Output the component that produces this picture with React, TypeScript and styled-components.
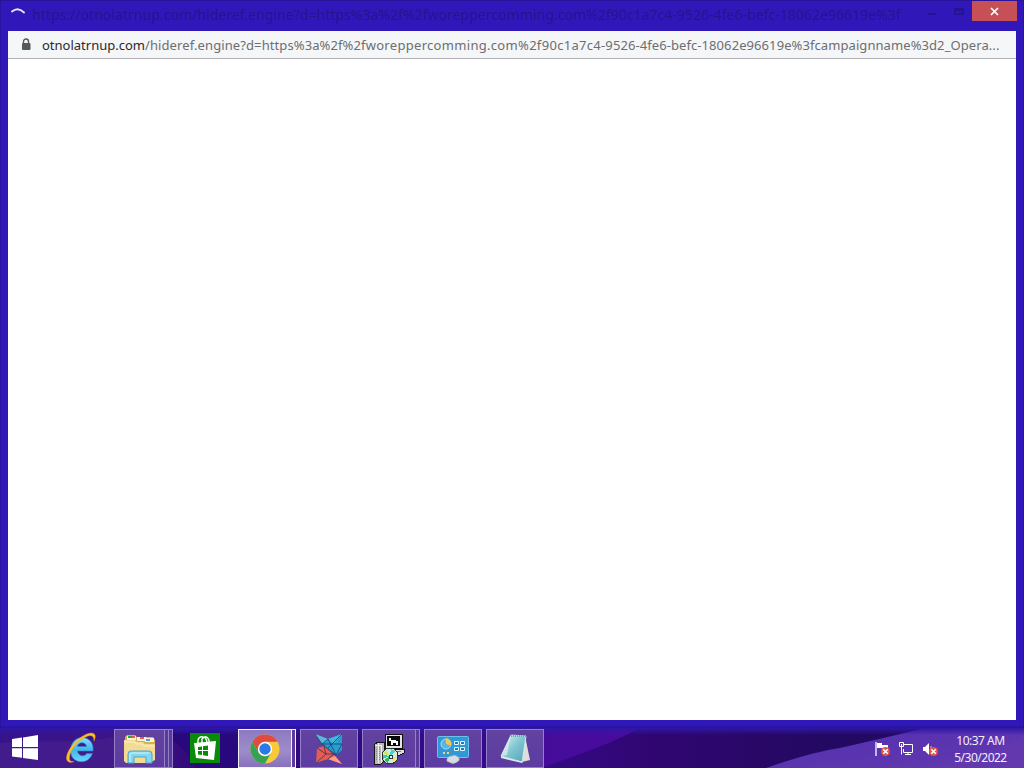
import React from 'react';
import styled, { createGlobalStyle } from 'styled-components';

const GlobalStyle = createGlobalStyle`
  * { box-sizing: border-box; }
  body { margin: 0; overflow: hidden; font-family: "Noto Sans", "Open Sans", sans-serif; }
  svg { display: block; }
`;

const Desktop = styled.div`
  width: 1024px;
  height: 768px;
  display: flex;
  flex-direction: column;
  background: #26087a;
`;

const BrowserWindow = styled.main`
  height: 728px;
  padding: 0 8px 8px;
  display: flex;
  flex-direction: column;
  background: #3017b9;
  border-top: 1px solid #2a129a;
  box-shadow: inset 1px 0 #2a139f, inset -1px 0 #2a139f, inset 0 -2px #2b14a0;
`;

const TitleBar = styled.header`
  height: 30px;
  flex: none;
  display: flex;
  align-items: flex-start;
`;

const Spinner = styled.svg`
  margin: 5px 0 0 2px;
  flex: none;
`;

const Title = styled.div`
  width: 884px;
  margin: 4px 0 0 6px;
  font-size: 14px;
  line-height: 20px;
  letter-spacing: 0.04px;
  white-space: nowrap;
  color: #26148c;
  filter: blur(0.6px);
`;

const Controls = styled.div`
  margin-left: auto;
  display: flex;
`;

const CloseButton = styled.button`
  width: 45px;
  height: 20px;
  margin-right: -1px;
  padding: 0;
  border: 0;
  display: grid;
  place-items: center;
  background: #c74f56;
`;

const AddressBar = styled.div`
  height: 28px;
  flex: none;
  padding: 0 0 0 13px;
  display: flex;
  align-items: center;
  background: #f5f6f8;
  border-bottom: 1px solid #b2b2b6;
`;

const Address = styled.div`
  margin-left: 11px;
  font-size: 13px;
  line-height: 20px;
  white-space: nowrap;
  color: #6c6e71;
`;

const Host = styled.span`
  color: #27292c;
`;

const UrlPart = styled.span<{ $tracking: number }>`
  letter-spacing: ${p => p.$tracking}px;
`;

const Page = styled.section`
  flex: 1;
  background: #fff;
`;

const Taskbar = styled.footer`
  position: relative;
  height: 40px;
  display: flex;
  align-items: flex-start;
  overflow: hidden;
`;

const Wallpaper = styled.svg`
  position: absolute;
  inset: 0;
`;

const Apps = styled.nav`
  position: relative;
  display: flex;
  padding-top: 1px;
`;

const Launcher = styled.div<{ $width: number; $end?: number }>`
  width: ${p => p.$width}px;
  height: 38px;
  padding-right: ${p => p.$end ?? 0}px;
  display: grid;
  place-items: center;
`;

const Group = styled.div<{ $gap?: number }>`
  display: flex;
  margin-right: ${p => p.$gap ?? 4}px;
`;

const AppButton = styled.div<{ $width: number; $active?: boolean }>`
  width: ${p => p.$width}px;
  height: 39px;
  display: grid;
  place-items: center;
  border: 1px solid ${p => (p.$active ? '#f4f1fb' : '#9480c8')};
  background: ${p => (p.$active ? 'linear-gradient(#8e79bf, #9d8ccb 55%, #8772bb)' : 'linear-gradient(#62439f, #5d3ba2)')};
`;

const StackEdge = styled.div<{ $active?: boolean }>`
  width: 4px;
  height: 39px;
  border: 1px solid ${p => (p.$active ? '#f4f1fb' : '#9480c8')};
  border-left: 0;
  background: #5a3b9c;
`;

const Tray = styled.div`
  position: relative;
  margin-left: auto;
  padding-right: 17px;
  display: flex;
  align-items: flex-start;
`;

const TrayIcons = styled.div`
  display: flex;
  gap: 8px;
  margin: 13px 16px 0 0;
`;

const Clock = styled.div`
  width: 53px;
  padding-top: 4px;
  text-align: center;
  white-space: nowrap;
  color: #f3effb;
  font-size: 12px;
  line-height: 17px;
  letter-spacing: -0.5px;
`;

function TaskbarArt() {
  return (
    <Wallpaper width="1024" height="40" viewBox="0 0 1024 40">
      <defs>
        <linearGradient id="base">
          <stop offset="0" stopColor="#34148c" /><stop offset=".14" stopColor="#421284" />
          <stop offset=".2" stopColor="#2d0879" /><stop offset=".5" stopColor="#350b8c" />
          <stop offset=".64" stopColor="#300571" /><stop offset=".8" stopColor="#240962" />
        </linearGradient>
        <linearGradient id="hill" x1="0" y1="0" x2="1" y2="1">
          <stop offset="0" stopColor="#5230b4" /><stop offset="1" stopColor="#6238ac" />
        </linearGradient>
        <linearGradient id="petal" x1="0" y1="0" x2="1" y2="0">
          <stop offset="0" stopColor="#450c9a" /><stop offset="1" stopColor="#480b9e" />
        </linearGradient>
        <linearGradient id="edge" x1="0" y1="0" x2="0" y2="1">
          <stop offset="0" stopColor="#2e17a9" /><stop offset="1" stopColor="#2e17a9" stopOpacity="0" />
        </linearGradient>
      </defs>
      <rect width="1024" height="40" fill="url(#base)" />
      <path d="M0 15C35 11 70 17 116 9V40H0Z" fill="#48208d" opacity=".65" />
      <path d="M172 0h70v40h-45Q184 18 172 13Z" fill="#29077c" />
      <path d="M540 0H638Q623 12 540 40Z" fill="url(#petal)" />
      <path d="M766 40Q812 24 840 20Q875 12 909 4L924 0H1024V40Z" fill="url(#hill)" />
      <path d="M920 40Q980 31 1024 7V40Z" fill="#6b3bb2" opacity=".35" />
      <rect width="1024" height="7" fill="url(#edge)" />
    </Wallpaper>
  );
}

const WindowsLogo = () => (
  <svg width="26" height="26" viewBox="0 0 26 26" fill="#fff">
    <path d="M0 4L10 2.600V12H0ZM11 2.400L26 0V12H11ZM0 13.200H10V22.800L0 21.400ZM11 13.200H26V25L11 23Z" />
  </svg>
);

const ExplorerE = () => (
  <svg width="32" height="32" viewBox="0 0 32 32">
    <defs><linearGradient id="ie" x1="0" y1="0" x2="0" y2="1"><stop stopColor="#89dcfa" /><stop offset=".5" stopColor="#43b5ed" /><stop offset="1" stopColor="#6dd5f8" /></linearGradient></defs>
    <path fillRule="evenodd" d="M28 19H12.500C13 24.500 20 25 21.500 21.500H27.500C24.500 29.500 17 31.500 11 28.500C2 24 4.500 6 17 5.500C25 5.500 29 12 28 19ZM12.500 14.500H21.500C21 9.500 13 9.500 12.500 14.500Z" fill="url(#ie)" stroke="#2780c7" strokeWidth=".6" />
    <path d="M9 29.500C4 32 0 29 2 23C5 13 17 2 26 1C31 1 31 5 29 9C29 4 27 3 23 4C14 7 5 18 4.500 25C4 29 6 30 9 29.500Z" fill="#f6c22b" stroke="#e79c13" strokeWidth=".4" />
  </svg>
);

const FolderIcon = () => (
  <svg width="34" height="32" viewBox="0 0 34 32">
    <path d="M2 4L4 2H12L14 4H30L32 7V27H2Z" fill="#d8ad5d" />
    <path d="M4 3H13V7H4ZM14 4H23V8H14ZM22 5H31V9H22Z" fill="#fff4cd" />
    <path d="M5 4h4" stroke="#29a552" strokeWidth="2" /><path d="M9 4h3M17 5h4" stroke="#e35f49" strokeWidth="2" /><path d="M23 7h4" stroke="#43a5df" strokeWidth="2" />
    <path d="M1 7H12L14 9H20L22 11H32V27L26 30H3L1 28Z" fill="#f3db93" />
    <path d="M2 9H11L13 11H19L21 13H31" fill="none" stroke="#fff3c8" />
    <path d="M5 29V21Q5 18 8 18H26Q29 18 29 21V30H23V24H11V30H5Z" fill="#83d7ee" stroke="#4da6ca" />
    <path d="M7 29V21Q7 20 9 20H26" fill="none" stroke="#d3f5fb" />
  </svg>
);

const StoreIcon = () => (
  <svg width="30" height="30" viewBox="0 0 30 30">
    <rect width="30" height="30" fill="#078b09" />
    <path d="M8 11V7Q9 3 13 4Q16 4 17 9M12 10V6Q16 1 19 7V9" fill="none" stroke="#fff" strokeWidth="1.400" />
    <path d="M4 10L26 8L24 27L6 25Z" fill="#fff" />
    <path d="M8 14L12 13.500V17H8ZM13 13.300L18 12.500V17H13ZM8 18H12V22L8 21.500ZM13 18H18V23L13 22.200Z" fill="#078b09" />
  </svg>
);

const ChromeIcon = () => (
  <svg width="30" height="30" viewBox="0 0 30 30">
    <circle cx="15" cy="15" r="14.500" fill="#f9c93b" />
    <path d="M2.440 7.750A14.500 14.500 0 0 1 27.560 7.750H15L8.700 18.600Z" fill="#df4b3f" />
    <path d="M2.440 7.750A14.500 14.500 0 0 0 15 29.500L21.300 18.600A7.250 7.250 0 0 1 8.700 18.600Z" fill="#35a255" />
    <circle cx="15" cy="15" r="7.200" fill="#fff" /><circle cx="15" cy="15" r="5.700" fill="#2b79e6" />
  </svg>
);

const PolygonBird = () => (
  <svg width="30" height="32" viewBox="0 0 30 32">
    <path d="M1 1L14 6L28 1V17L22 22L8 11Z" fill="#259fd0" />
    <path d="M3 15L10 13L21 23L28 31L14 26L2 30Z" fill="#e85b51" />
    <path d="M14 26L21 23L28 31Z" fill="#ff9c83" /><path d="M1 1L14 6L8 11Z" fill="#5db8d8" /><path d="M14 6L28 1L20 11Z" fill="#42b4df" />
    <path d="M1 1L8 11L22 22M14 6L8 11H28M14 6L22 22L28 11M28 1L14 15M3 15L12 21L2 30M10 13L12 21H20L14 26" fill="none" stroke="#293765" strokeWidth=".8" />
  </svg>
);

const InstallerIcon = () => (
  <svg width="32" height="32" viewBox="0 0 32 32" shapeRendering="crispEdges">
    <path d="M1 12L5 9H11V28L8 31H1Z" fill="#b9b9b9" stroke="#171717" />
    <path d="M5 10V30M2 12H9M8 12V30" stroke="#eee" /><path d="M3 16v12M6 14v14" stroke="#8c8c8c" strokeDasharray="1 1" />
    <path d="M12 1H29V15H12Z" fill="#e4e4e4" stroke="#111" /><path d="M14 3H27V13H14Z" fill="#080808" />
    <path d="M16 5h2v2h5v1h2v4h-2v-2h-3v2h-2V8h-2Z" fill="#fff" />
    <path d="M12 16H31V20L27 22H12Z" fill="#dedede" stroke="#111" /><path d="M22 18h6" stroke="#777" />
    <circle cx="17" cy="23" r="8" fill="#d4ebd8" stroke="#26312a" />
    <path d="M17 23L10 20L13 17Z" fill="#cfe65d" /><path d="M17 23L18 16L22 18Z" fill="#38d4d7" /><path d="M17 23L24 24L21 29Z" fill="#f4e65e" /><path d="M17 23L15 30L11 27Z" fill="#37bb54" /><path d="M17 23L10 22L10 26Z" fill="#33c7c6" />
    <path d="M16 22h3v3h-3Z" fill="#fff" stroke="#333" />
  </svg>
);

const ControlPanelIcon = () => (
  <svg width="32" height="30" viewBox="0 0 32 30">
    <rect x=".5" y="2.500" width="31" height="21" rx="1" fill="#3297d5" stroke="#69c1ed" />
    <circle cx="9" cy="10" r="5" fill="#56b5e4" stroke="#a8dcf4" /><path d="M9 10V4A6 6 0 0 1 14 12Z" fill="#edc75c" />
    <path d="M6 19h2m2 0h2" stroke="#f5d768" strokeWidth="2" />
    <path d="M17.500 7.500h4v3h-4ZM23.500 7.500h4v3h-4ZM17.500 13.500h4v3h-4ZM23.500 13.500h4v3h-4Z" fill="#1681be" stroke="#dcfaff" />
    <path d="M10 25Q11 22 15 22Q18 20 21 23Q24 26 20 28Q16 31 12 28Q9 28 10 25Z" fill="#d4dce5" stroke="#a2b0c0" strokeWidth=".6" />
  </svg>
);

const NotepadIcon = () => (
  <svg width="32" height="30" viewBox="0 0 32 30">
    <defs><linearGradient id="note" x1="0" y1="0" x2="1" y2="1"><stop stopColor="#e4f3f2" /><stop offset=".5" stopColor="#7fc5d2" /><stop offset="1" stopColor="#579fb6" /></linearGradient></defs>
    <path d="M26 2L31 26L23 28Z" fill="#deded9" /><path d="M2 22L12 1L27 2L23 28Z" fill="url(#note)" stroke="#d9f0ef" strokeWidth=".8" />
    <path d="M2 22L24 28L23 29L2 24Z" fill="#d7ecee" /><path d="M12 1L8 21L2 22Z" fill="#e4f3ef" opacity=".65" />
    <path d="M12 2H27" stroke="#8b9da1" strokeWidth="2" strokeDasharray="1 1" />
  </svg>
);

const ErrorBadge = () => <><circle cx="11.500" cy="10.500" r="4.500" fill="#e25549" /><path d="M9.200 8.200L13.800 12.800M13.800 8.200L9.200 12.800" stroke="#fff" strokeWidth="1.500" /></>;

export default function App() {
  return (
    <Desktop>
      <GlobalStyle />
      <BrowserWindow>
        <TitleBar>
          <Spinner width="16" height="16" viewBox="0 0 16 16"><path d="M2 5.500Q8 .5 14 6.500" fill="none" stroke="#e7e2fb" strokeWidth="1.800" strokeLinecap="round" /></Spinner>
          <Title>https://otnolatrnup.com/hideref.engine?d=https%3a%2f%2fworeppercomming.com%2f90c1a7c4-9526-4fe6-befc-18062e96619e%3f</Title>
          <Controls>
            <svg width="56" height="20" viewBox="6 0 56 20" fill="none" stroke="#251395" strokeWidth="2"><path d="M18 13h8M45 8h8v5h-8ZM45 9h8" /></svg>
            <CloseButton aria-label="Close"><svg width="9" height="9" viewBox="0 0 9 9"><path d="M1 1L8 8M8 1L1 8" stroke="#fff" strokeWidth="1.700" /></svg></CloseButton>
          </Controls>
        </TitleBar>
        <AddressBar>
          <svg width="10" height="13" viewBox="0 0 10 13"><path d="M2.500 6V3.500a2.500 2.500 0 0 1 5 0V6" fill="none" stroke="#55585d" strokeWidth="1.400" /><rect x="1" y="5" width="8.500" height="7" rx="1" fill="#55585d" /></svg>
          <Address>
            <Host>otnolatrnup.com</Host>
            <UrlPart $tracking={0.1}>/hideref.engine?d=https%3a%2f%2f</UrlPart>
            <UrlPart $tracking={0.31}>woreppercomming.com%2f90c1a7c4</UrlPart>
            <UrlPart $tracking={0.08}>-9526-4fe6-befc-18062e96619e%3fcampaignname%3d2_Opera...</UrlPart>
          </Address>
        </AddressBar>
        <Page />
      </BrowserWindow>
      <Taskbar>
        <TaskbarArt />
        <Apps>
          <Launcher $width={50}><WindowsLogo /></Launcher>
          <Launcher $width={64} $end={2}><ExplorerE /></Launcher>
          <Group $gap={0}><AppButton $width={51}><FolderIcon /></AppButton><StackEdge /><StackEdge /></Group>
          <Launcher $width={65} $end={2}><StoreIcon /></Launcher>
          <Group><AppButton $width={54} $active><ChromeIcon /></AppButton><StackEdge $active /></Group>
          <Group><AppButton $width={58}><PolygonBird /></AppButton></Group>
          <Group><AppButton $width={54}><InstallerIcon /></AppButton><StackEdge /></Group>
          <Group><AppButton $width={58}><ControlPanelIcon /></AppButton></Group>
          <Group><AppButton $width={58}><NotepadIcon /></AppButton></Group>
        </Apps>
        <Tray>
          <TrayIcons>
            <svg width="16" height="16" viewBox="0 0 16 16"><path d="M2 1V15" stroke="#fff" strokeWidth="1.300" /><path d="M3 2H8V4H14V9H8V7H3Z" fill="#fff" /><ErrorBadge /></svg>
            <svg width="16" height="16" viewBox="0 0 16 16" fill="none" stroke="#fff"><path d="M6 3.500H14.500V11.500H5.500V8M7 13.500H13M10 12V14" /><path d="M1.500 1.500H5.500V5.500H1.500ZM3.500 3V13.500" /></svg>
            <svg width="16" height="16" viewBox="0 0 16 16"><path d="M1 6H3L7 2V14L3 10H1Z" fill="#fff" /><path d="M9 5V10" stroke="#cbbce8" /><ErrorBadge /></svg>
          </TrayIcons>
          <Clock><div>10:37 AM</div><div>5/30/2022</div></Clock>
        </Tray>
      </Taskbar>
    </Desktop>
  );
}
